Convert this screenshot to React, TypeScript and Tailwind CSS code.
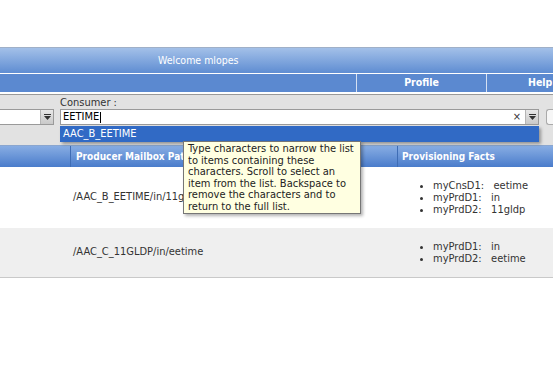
import React from 'react';

const DropBtn = () => (
  <div className="flex h-full w-[13px] items-center justify-center border-l border-[#b5b5b5] bg-gradient-to-b from-[#e8e8e8] to-[#c9c9c9]">
    <svg width="7" height="6" viewBox="0 0 7 6">
      <rect x="0" y="0" width="7" height="1" fill="#333" />
      <path d="M0 2 L7 2 L3.5 6 Z" fill="#333" />
    </svg>
  </div>
);

const Facts = ({ items }: { items: [string, string][] }) => (
  <ul className="list-disc pl-[36px] leading-[12px] text-[#333]">
    {items.map(([k, v]) => (
      <li key={k}>
        {k}:&nbsp;&nbsp;&nbsp;{v}
      </li>
    ))}
  </ul>
);

export default function App() {
  return (
    <div className="relative h-[367px] w-[553px] overflow-hidden bg-white font-['DejaVu_Sans_Condensed','DejaVu_Sans',sans-serif] text-[11px] text-[#333]">
      <div className="h-[47px]" />
      <div className="flex h-[26px] items-center border-t border-[#9fb0c8] bg-gradient-to-b from-[#a3c0e8] to-[#5f8dd2] pl-[158px] text-[10.5px] text-white">
        Welcome mlopes
      </div>
      <div className="h-[1px] bg-white" />
      <div className="flex h-[18px] bg-[#5b89d0] text-[10.5px] font-bold text-white">
        <div className="w-[356px]" />
        <div className="flex w-[130px] items-center justify-center border-l border-[#d5e0f2]">Profile</div>
        <div className="flex flex-1 items-center border-l border-[#d5e0f2] pl-[41px]">Help</div>
      </div>
      <div className="h-[2px] bg-white" />
      <div className="h-[51px] border-t border-[#999] bg-[#e2e2e2]">
        <div className="flex">
          <div className="flex w-[60px] flex-col">
            <div className="h-[14px]" />
            <div className="flex h-[16px] w-[54px] border border-l-0 border-[#9a9a9a] bg-white">
              <div className="flex-1" />
              <DropBtn />
            </div>
          </div>
          <div className="flex flex-1 flex-col">
            <div className="h-[14px] pt-[2px] leading-[11px]">Consumer :</div>
            <div className="flex items-center">
              <div className="flex h-[16px] w-[479px] items-center border border-[#9a9a9a] bg-white">
                <span className="pl-[2px] text-black">EETIME</span>
                <span className="ml-[1px] h-[11px] w-[1px] bg-black" />
                <span className="ml-auto mr-[4px] text-[11px] text-[#333]">×</span>
                <DropBtn />
              </div>
              <div className="ml-[7px] h-[16px] flex-1 rounded-l-[3px] border border-r-0 border-[#aaa] bg-[#f6f6f6]" />
            </div>
          </div>
        </div>
      </div>
      <div className="grid h-[22px] grid-cols-[70px_327px_1fr] border-t border-[#8aa6cf] bg-gradient-to-b from-[#88ade3] to-[#4a7ccb] text-[10px] font-bold text-white">
        <div />
        <div className="flex items-center border-l border-[#3f6db5] pl-[5px]">Producer Mailbox Path</div>
        <div className="flex items-center border-l border-[#3f6db5] pl-[4px]">Provisioning Facts</div>
      </div>
      <div className="grid h-[61px] grid-cols-[70px_327px_1fr] items-center bg-white">
        <div />
        <div className="pl-[3px]">/AAC_B_EETIME/in/11gldp</div>
        <Facts items={[['myCnsD1', 'eetime'], ['myPrdD1', 'in'], ['myPrdD2', '11gldp']]} />
      </div>
      <div className="grid h-[50px] grid-cols-[70px_327px_1fr] items-center border-b border-[#c9c9c9] bg-[#efefef]">
        <div />
        <div className="pl-[3px]">/AAC_C_11GLDP/in/eetime</div>
        <Facts items={[['myPrdD1', 'in'], ['myPrdD2', 'eetime']]} />
      </div>

      <div className="absolute left-[60px] top-[126px] flex h-[16px] w-[479px] items-center bg-[#316ac5] pl-[3px] text-white shadow-[2px_2px_3px_rgba(0,0,0,0.35)]">
        AAC_B_EETIME
      </div>
      <div className="absolute left-[183px] top-[141px] w-[178px] border border-[#767676] bg-[#ffffe1] px-[4px] py-[1px] leading-[11.5px] text-[#222] shadow-[2px_2px_3px_rgba(0,0,0,0.3)]">
        Type characters to narrow the list to items containing these characters. Scroll to select an item from the list. Backspace to remove the characters and to return to the full list.
      </div>
    </div>
  );
}
